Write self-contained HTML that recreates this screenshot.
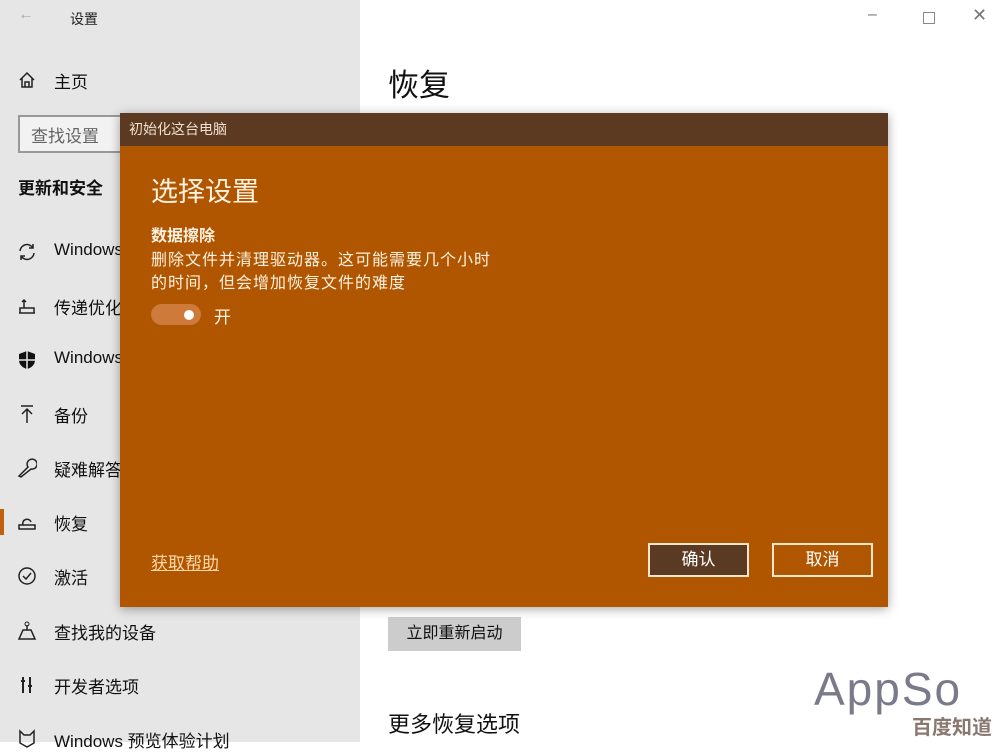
<!DOCTYPE html>
<html><head><meta charset="utf-8"><style>
body{margin:0;width:1000px;height:742px;overflow:hidden;position:relative;font-family:"Liberation Sans","Noto Sans CJK SC",sans-serif;background:#fff;}
.side{position:absolute;left:0;top:0;width:360px;height:742px;background:#e6e6e6;}
.t{position:absolute;white-space:nowrap;}
.item{position:absolute;left:54px;font-size:17px;color:#111;}
.ic{position:absolute;left:17px;width:20px;height:20px;}
.dlg{position:absolute;left:120px;top:113px;width:768px;height:494px;background:#b05500;box-shadow:0 2px 10px rgba(0,0,0,.35);}
.bar{height:33px;background:#5c3a21;color:#f0e0d0;font-size:14px;line-height:33px;padding-left:9px;}
.btn{position:absolute;top:430px;width:97px;height:30px;border:2px solid #f6e6cc;color:#fff;font-size:17px;text-align:center;line-height:30px;}
</style></head><body>
<div class="side">
<div class="t" style="left:18px;top:6px;font-size:16px;color:#aaa">←</div>
<div class="t" style="left:70px;top:9px;font-size:14px;color:#222">设置</div>
<svg class="ic" style="top:70px" viewBox="0 0 20 20"><path d="M3 10 L10 3 L17 10 M5 8 V17 H15 V8 M8 17 V12 H12 V17" fill="none" stroke="#222" stroke-width="1.5"/></svg>
<div class="item" style="top:68px">主页</div>
<div style="position:absolute;left:18px;top:115px;width:120px;height:34px;border:2px solid #999;background:#f2f2f2"></div>
<div class="t" style="left:31px;top:122px;font-size:17px;color:#666">查找设置</div>
<div class="t" style="left:18px;top:174px;font-size:17px;font-weight:bold;color:#111">更新和安全</div>
<svg class="ic" style="top:242px" viewBox="0 0 20 20"><path d="M3 9 A7 7 0 0 1 16 6 M17 11 A7 7 0 0 1 4 14 M16 2 V6 H12 M4 18 V14 H8" fill="none" stroke="#222" stroke-width="1.5"/></svg>
<div class="item" style="top:240px">Windows</div>
<svg class="ic" style="top:296px" viewBox="0 0 20 20"><path d="M2 17 H18 M3 17 V12 H17 V17 M7 12 V4 M5 6 L7 4 L9 6" fill="none" stroke="#222" stroke-width="1.5"/></svg>
<div class="item" style="top:294px">传递优化</div>
<svg class="ic" style="top:350px" viewBox="0 0 20 20"><path d="M10 1 L18 4 V10 C18 15 14 18 10 19 C6 18 2 15 2 10 V4 Z" fill="#111"/><path d="M10 1 V19 M2 10 H18" stroke="#e6e6e6" stroke-width="1.5"/></svg>
<div class="item" style="top:348px">Windows</div>
<svg class="ic" style="top:404px" viewBox="0 0 20 20"><path d="M4 2 H16 M10 19 V5 M5 10 L10 5 L15 10" fill="none" stroke="#222" stroke-width="1.5"/></svg>
<div class="item" style="top:402px">备份</div>
<svg class="ic" style="top:458px" viewBox="0 0 20 20"><path d="M2 18 L11 9 A5 5 0 1 1 14 11 L4 19 Z" fill="none" stroke="#222" stroke-width="1.5"/></svg>
<div class="item" style="top:456px">疑难解答</div>
<div style="position:absolute;left:0;top:509px;width:4px;height:26px;background:#c15f0f"></div>
<svg class="ic" style="top:512px" viewBox="0 0 20 20"><path d="M2 13 H18 V17 H2 Z M6 13 A4 4 0 1 1 14 10" fill="none" stroke="#222" stroke-width="1.5"/></svg>
<div class="item" style="top:510px">恢复</div>
<svg class="ic" style="top:566px" viewBox="0 0 20 20"><circle cx="10" cy="10" r="8" fill="none" stroke="#222" stroke-width="1.5"/><path d="M6 10 L9 13 L14 7" fill="none" stroke="#222" stroke-width="1.5"/></svg>
<div class="item" style="top:564px">激活</div>
<svg class="ic" style="top:621px" viewBox="0 0 20 20"><path d="M2 18 H18 L14 9 H6 Z M10 9 V4" fill="none" stroke="#222" stroke-width="1.5"/><circle cx="10" cy="3" r="2" fill="none" stroke="#222"/></svg>
<div class="item" style="top:619px">查找我的设备</div>
<svg class="ic" style="top:675px" viewBox="0 0 20 20"><path d="M6 2 V18 M13 2 V18 M4 6 H8 M11 11 H15" fill="none" stroke="#222" stroke-width="2"/></svg>
<div class="item" style="top:673px">开发者选项</div>
<svg class="ic" style="top:728px" viewBox="0 0 20 20"><path d="M3 3 L7 7 H13 L17 3 V15 L10 19 L3 15 Z" fill="none" stroke="#222" stroke-width="1.5"/></svg>
<div class="item" style="top:727px">Windows 预览体验计划</div>
</div>
<div class="t" style="left:868px;top:6px;font-size:16px;color:#777">–</div>
<div style="position:absolute;left:923px;top:12px;width:10px;height:10px;border:1px solid #888"></div>
<div class="t" style="left:972px;top:5px;font-size:18px;color:#777">✕</div>
<div class="t" style="left:388px;top:60px;font-size:31px;color:#111">恢复</div>
<div style="position:absolute;left:388px;top:617px;width:133px;height:34px;background:#ccc;font-size:16px;line-height:34px;text-align:center;color:#111">立即重新启动</div>
<div class="t" style="left:388px;top:707px;font-size:22px;color:#111">更多恢复选项</div>
<div class="t" style="left:814px;top:662px;font-size:46px;color:#7a7a8a;letter-spacing:2px">AppSo</div>
<div class="t" style="left:912px;top:711px;font-size:20px;color:#8a7870;font-weight:bold">百度知道</div>
<div class="dlg">
<div class="bar">初始化这台电脑</div>
<div class="t" style="left:31px;top:57px;font-size:27px;color:#fff2e0">选择设置</div>
<div class="t" style="left:31px;top:109px;font-size:16px;font-weight:bold;color:#fff2e0">数据擦除</div>
<div class="t" style="left:31px;top:136px;font-size:16px;line-height:23px;letter-spacing:1px;color:#fff2e0">删除文件并清理驱动器。这可能需要几个小时<br>的时间，但会增加恢复文件的难度</div>
<div style="position:absolute;left:31px;top:191px;width:50px;height:21px;border-radius:11px;background:#cd7a3a"></div>
<div style="position:absolute;left:64px;top:197px;width:10px;height:10px;border-radius:5px;background:#fff"></div>
<div class="t" style="left:94px;top:190px;font-size:17px;color:#fff2e0">开</div>
<div class="t" style="left:31px;top:436px;font-size:17px;color:#ffd9a8;text-decoration:underline">获取帮助</div>
<div class="btn" style="left:528px;background:#5a3a22">确认</div>
<div class="btn" style="left:652px;background:#b05500">取消</div>
</div>
</body></html>
